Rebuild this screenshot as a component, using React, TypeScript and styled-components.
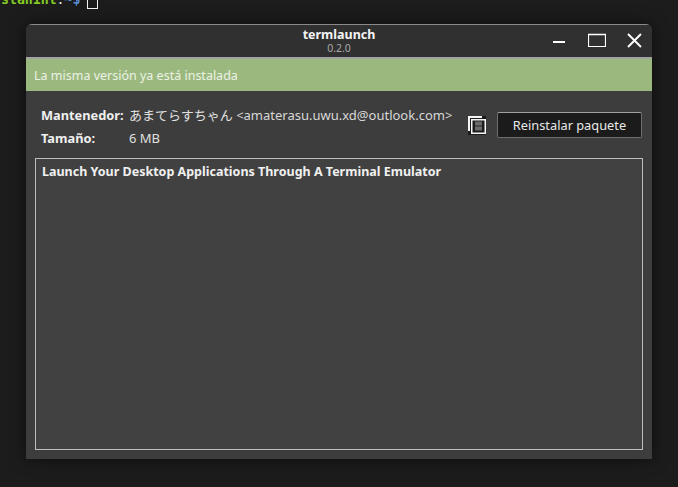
import { createGlobalStyle, styled } from "styled-components";

const GlobalStyle = createGlobalStyle`
  html, body {
    margin: 0;
    height: 487px;
    overflow: hidden;
    background: #1c1c1c;
  }
`;

const uiFont = `"Noto Sans", "Noto Sans CJK JP", sans-serif`;

const Desktop = styled.div`
  width: 678px;
  height: 487px;
  overflow: hidden;
  background: #1c1c1c;
`;

const Prompt = styled.div`
  display: flex;
  align-items: flex-start;
  height: 24px;
  padding-left: 1px;
  font-family: "DejaVu Sans Mono", monospace;
  font-size: 13.2px;
  line-height: 16px;
`;

const PromptLine = styled.div`
  display: flex;
  margin-top: -8px;
`;

const PromptUser = styled.span`
  color: #84cc22;
  font-weight: 700;
`;

const PromptColon = styled.span`
  color: #f2f2f2;
`;

const PromptPath = styled.span`
  color: #5c8fd6;
  font-weight: 700;
`;

const PromptCursor = styled.span`
  width: 9px;
  height: 14px;
  margin-top: 1px;
  margin-left: 7px;
  border: 1px solid #f2f2f2;
`;

const Window = styled.div`
  width: 626px;
  height: 435px;
  margin-left: 26px;
  display: flex;
  flex-direction: column;
  border-radius: 6px 6px 0 0;
  background: #3d3d3d;
  overflow: hidden;
  box-shadow: 0 0 16px rgba(0, 0, 0, 0.55);
  font-family: ${uiFont};
`;

const TitleBar = styled.header`
  position: relative;
  height: 35px;
  flex: none;
  box-sizing: border-box;
  padding-top: 2px;
  display: flex;
  flex-direction: column;
  align-items: center;
  background: #303030;
  border-top: 1px solid #8a8a8a;
  border-bottom: 2px solid #a3a3a3;
`;

const AppName = styled.div`
  color: #f4f4f4;
  font-size: 12.5px;
  font-weight: 700;
  line-height: 15px;
`;

const AppVersion = styled.div`
  color: #a8a8a8;
  font-size: 10.5px;
  line-height: 13px;
`;

const WindowControls = styled.div`
  position: absolute;
  top: 7px;
  right: 10px;
  display: flex;
  align-items: center;
`;

const MinimizeIcon = styled.svg`
  margin-right: 23px;
`;

const MaximizeIcon = styled.svg`
  margin-right: 21px;
`;

const Banner = styled.div`
  height: 32px;
  flex: none;
  display: flex;
  align-items: center;
  padding-left: 8px;
  background: #9bb97f;
  color: #ecf2e4;
  font-size: 12.5px;
`;

const Body = styled.div`
  flex: 1;
  display: flex;
  flex-direction: column;
  padding: 0 9px 9px;
`;

const InfoRow = styled.div`
  height: 67px;
  flex: none;
  display: flex;
  align-items: center;
`;

const Details = styled.div`
  display: grid;
  grid-template-columns: 88px auto;
  row-gap: 6px;
  padding: 4px 0 0 6px;
  box-sizing: border-box;
  align-items: center;
  flex: none;
  width: 424px;
`;

const Label = styled.div`
  color: #f0f0f0;
  font-size: 12.8px;
  font-weight: 700;
  line-height: 17px;
`;

const Value = styled.div`
  color: #e0e0e0;
  font-size: 13px;
  line-height: 17px;
  white-space: nowrap;
`;

const Email = styled.span`
  font-size: 13px;
  color: #d8d8d8;
`;

const CopyButton = styled.button`
  flex: none;
  width: 18px;
  height: 19px;
  margin-left: 9px;
  margin-top: 1px;
  padding: 0;
  border: 0;
  background: none;
  display: flex;
`;

const ActionButton = styled.button`
  flex: none;
  width: 145px;
  height: 26px;
  margin-left: 11px;
  border: 1px solid #6e6e6e;
  border-top-color: #a0a0a0;
  border-radius: 2px;
  background: #1b1b1b;
  color: #e8e8e8;
  font-family: ${uiFont};
  font-size: 12.8px;
  padding: 0;
`;

const Description = styled.div`
  flex: 1;
  box-sizing: border-box;
  border: 1px solid #bdbdbd;
  padding: 4px 6px;
  background: #414141;
  color: #f0f0f0;
  font-size: 12.5px;
  font-weight: 700;
  line-height: 17px;
`;

const App = () => {
  return (
    <Desktop>
      <GlobalStyle />
      <Prompt>
        <PromptLine>
          <PromptUser>stan1nt</PromptUser>
          <PromptColon>:</PromptColon>
          <PromptPath>~$</PromptPath>
          <PromptCursor />
        </PromptLine>
      </Prompt>
      <Window>
        <TitleBar>
          <AppName>termlaunch</AppName>
          <AppVersion>0.2.0</AppVersion>
          <WindowControls>
            <MinimizeIcon width="12" height="18" viewBox="0 0 12 18">
              <path d="M0 10h12" stroke="#fff" strokeWidth="2" />
            </MinimizeIcon>
            <MaximizeIcon width="18" height="18" viewBox="0 0 18 18">
              <path d="M.5 2.5h17v12H.5z" fill="none" stroke="#fff" strokeWidth="1.2" />
              <path d="M0 2.5h18" stroke="#fff" strokeWidth="1.6" />
            </MaximizeIcon>
            <svg width="15" height="18" viewBox="0 0 15 18">
              <path d="M1 2l13 13M14 2L1 15" stroke="#fff" strokeWidth="1.9" />
            </svg>
          </WindowControls>
        </TitleBar>
        <Banner>La misma versión ya está instalada</Banner>
        <Body>
          <InfoRow>
            <Details>
              <Label>Mantenedor:</Label>
              <Value>
                あまてらすちゃん <Email>&lt;amaterasu.uwu.xd@outlook.com&gt;</Email>
              </Value>
              <Label>Tamaño:</Label>
              <Value>6 MB</Value>
            </Details>
            <CopyButton aria-label="Copiar">
              <svg width="18" height="19" viewBox="0 0 18 19">
                <rect width="18" height="19" fill="#1b1b1b" />
                <path d="M0 0h14v2H2v13H0z" fill="#f5f5f5" />
                <rect x="3.75" y="3.75" width="13.5" height="13.5" fill="#1b1b1b" stroke="#f5f5f5" strokeWidth="1.5" />
                <rect x="7" y="5.5" width="7" height="9" fill="#6a6a6a" />
                <path d="M7 10h7" stroke="#2a2a2a" />
              </svg>
            </CopyButton>
            <ActionButton>Reinstalar paquete</ActionButton>
          </InfoRow>
          <Description>Launch Your Desktop Applications Through A Terminal Emulator</Description>
        </Body>
      </Window>
    </Desktop>
  );
};

export default App;
